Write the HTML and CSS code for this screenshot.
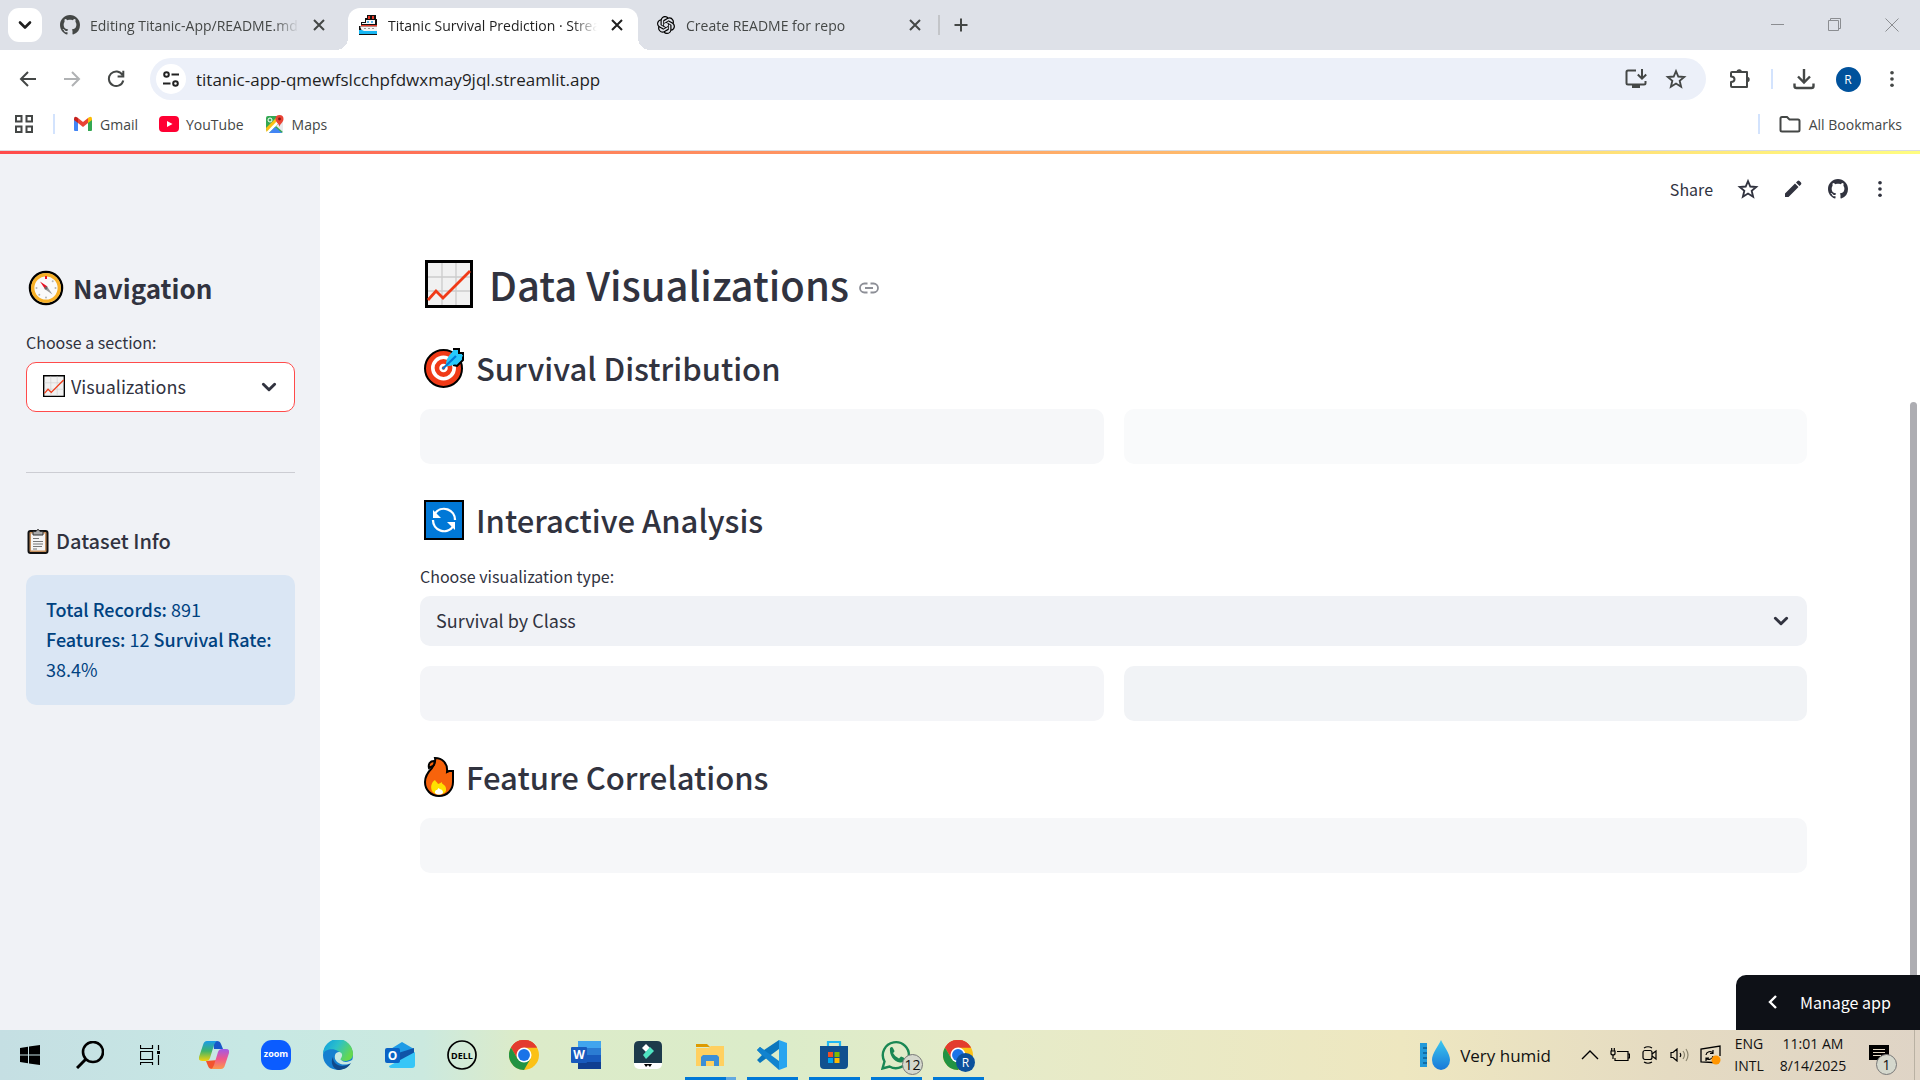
FILE: index.html
```html
<!DOCTYPE html>
<html lang="en">
<head>
<meta charset="utf-8">
<title>Titanic Survival Prediction · Streamlit</title>
<link rel="stylesheet" href="styles.css">
</head>
<body>
<svg class="defs" aria-hidden="true">
  <symbol id="github" viewBox="0 0 16 16"><path fill="currentColor" d="M8 0C3.58 0 0 3.58 0 8c0 3.54 2.29 6.53 5.47 7.59.4.07.55-.17.55-.38 0-.19-.01-.82-.01-1.49-2.01.37-2.53-.49-2.69-.94-.09-.23-.48-.94-.82-1.13-.28-.15-.68-.52-.01-.53.63-.01 1.08.58 1.23.82.72 1.21 1.87.87 2.33.66.07-.52.28-.87.51-1.07-1.78-.2-3.64-.89-3.64-3.95 0-.87.31-1.59.82-2.15-.08-.2-.36-1.02.08-2.12 0 0 .67-.21 2.2.82.64-.18 1.32-.27 2-.27s1.36.09 2 .27c1.53-1.04 2.2-.82 2.2-.82.44 1.1.16 1.92.08 2.12.51.56.82 1.27.82 2.15 0 3.07-1.87 3.75-3.65 3.95.29.25.54.73.54 1.48 0 1.07-.01 1.93-.01 2.2 0 .21.15.46.55.38A8.01 8.01 0 0 0 16 8c0-4.42-3.58-8-8-8z"/></symbol>
  <symbol id="close" viewBox="0 0 20 20"><path d="M5 5l10 10M15 5L5 15" fill="none" stroke="currentColor" stroke-width="2"/></symbol>
  <symbol id="dots" viewBox="0 0 24 24"><g fill="currentColor"><circle cx="12" cy="4.500" r="2.200"/><circle cx="12" cy="12" r="2.200"/><circle cx="12" cy="19.500" r="2.200"/></g></symbol>
  <symbol id="chevron" viewBox="0 0 16 16"><path d="M3 5.500l5 5 5-5" fill="none" stroke="currentColor" stroke-width="2.600" stroke-linecap="round" stroke-linejoin="round"/></symbol>
  <symbol id="star" viewBox="0 0 24 24"><path d="M12 3.300l2.500 6 6.500.5-5 4.200 1.600 6.400L12 17l-5.600 3.400L8 14 3 9.800l6.500-.5z" fill="none" stroke="currentColor" stroke-width="2"/></symbol>
  <symbol id="chart" viewBox="0 0 48 48"><path fill="#f1f1f1" stroke="#000" stroke-width="3" d="M1.500 1.500h45v45h-45z"/><path d="M17 3v42M31 3v42M3 17h42M3 31h42" stroke="#ccc" stroke-width="1.300"/><path d="M3 40l8-9 7 7L45 11" fill="none" stroke="#f03a17" stroke-width="2.800"/></symbol>
  <symbol id="chrome" viewBox="0 0 48 48"><circle cx="24" cy="24" r="24" fill="#fbc116"/><path fill="#e33b2e" d="M24 24L3.200 12A24 24 0 0 1 44.800 12H24z"/><path fill="#e33b2e" d="M3.200 12l10.400 18L24 24V12h20.800A24 24 0 0 0 3.200 12z"/><path fill="#229342" d="M3.200 12A24 24 0 0 0 24 48l10.400-18L24 24l-10.400 6z"/><circle cx="24" cy="24" r="12" fill="#fff"/><circle cx="24" cy="24" r="9.500" fill="#1a73e8"/></symbol>
</svg>

<header class="browser">
  <div class="tabstrip">
    <button class="tab-search" aria-label="Search tabs"><svg width="16" height="16"><use href="#chevron"/></svg></button>
    <div class="tab">
      <svg width="20" height="20"><use href="#github"/></svg>
      <span class="tab-title">Editing Titanic-App/README.md</span>
      <button class="tab-close" aria-label="Close tab"><svg width="20" height="20"><use href="#close"/></svg></button>
    </div>
    <div class="tab active">
      <svg width="20" height="20" viewBox="0 0 20 20"><path fill="#111" d="M9 0h9v4h1v16H1v-9h2V7h4V3h2z"/><path fill="#f7f7f7" d="M8 5h9v4H4V8h4z"/><path fill="#e8392a" d="M10 1h2v3h-2zM14 1h2v3h-2zM3 10h16v1.500H3z"/><path fill="#5bb8e8" d="M9 6h2v2H9zM13 6h2v2h-2z"/><path fill="#f4f4f4" d="M2 11.500h17V16H4z"/><path fill="#999" d="M6 13h2v1H6zM10 13h2v1h-2zM14 13h2v1h-2z"/><path fill="#18b6f2" d="M1 15h3l2 1h13v3H1z"/></svg>
      <span class="tab-title">Titanic Survival Prediction · Streamlit</span>
      <button class="tab-close" aria-label="Close tab"><svg width="20" height="20"><use href="#close"/></svg></button>
    </div>
    <div class="tab">
      <svg width="20" height="18" viewBox="0 0 24 24"><path d="M22.2819 9.8211a5.9847 5.9847 0 0 0-.5157-4.9108 6.0462 6.0462 0 0 0-6.5098-2.9A6.0651 6.0651 0 0 0 4.9807 4.1818a5.9847 5.9847 0 0 0-3.9977 2.9 6.0462 6.0462 0 0 0 .7427 7.0966 5.98 5.98 0 0 0 .511 4.9107 6.051 6.051 0 0 0 6.5146 2.9001A5.9847 5.9847 0 0 0 13.2599 24a6.0557 6.0557 0 0 0 5.7718-4.2058 5.9894 5.9894 0 0 0 3.9977-2.9001 6.0557 6.0557 0 0 0-.7475-7.0729zm-9.022 12.6081a4.4755 4.4755 0 0 1-2.8764-1.0408l.1419-.0804 4.7783-2.7582a.7948.7948 0 0 0 .3927-.6813v-6.7369l2.02 1.1686a.071.071 0 0 1 .038.052v5.5826a4.504 4.504 0 0 1-4.4945 4.4944zm-9.6607-4.1254a4.4708 4.4708 0 0 1-.5346-3.0137l.142.0852 4.783 2.7582a.7712.7712 0 0 0 .7806 0l5.8428-3.3685v2.3324a.0804.0804 0 0 1-.0332.0615L9.74 19.9502a4.4992 4.4992 0 0 1-6.1408-1.6464zM2.3408 7.8956a4.485 4.485 0 0 1 2.3655-1.9728V11.6a.7664.7664 0 0 0 .3879.6765l5.8144 3.3543-2.0201 1.1685a.0757.0757 0 0 1-.071 0l-4.8303-2.7865A4.504 4.504 0 0 1 2.3408 7.872zm16.5963 3.8558L13.1038 8.364 15.1192 7.2a.0757.0757 0 0 1 .071 0l4.8303 2.7913a4.4944 4.4944 0 0 1-.6765 8.1042v-5.6772a.79.79 0 0 0-.407-.667zm2.0107-3.0231l-.142-.0852-4.7735-2.7818a.7759.7759 0 0 0-.7854 0L9.409 9.2297V6.8974a.0662.0662 0 0 1 .0284-.0615l4.8303-2.7866a4.4992 4.4992 0 0 1 6.6802 4.66zM8.3065 12.863l-2.02-1.1638a.0804.0804 0 0 1-.038-.0567V6.0742a4.4992 4.4992 0 0 1 7.3757-3.4537l-.142.0805L8.704 5.459a.7948.7948 0 0 0-.3927.6813zm1.0976-2.3654l2.602-1.4998 2.6069 1.4998v2.9994l-2.5974 1.4997-2.6067-1.4997Z"/></svg>
      <span class="tab-title">Create README for repo</span>
      <button class="tab-close" aria-label="Close tab"><svg width="20" height="20"><use href="#close"/></svg></button>
    </div>
    <div class="new-tab">
      <button aria-label="New tab"><svg width="20" height="20" viewBox="0 0 20 20"><path d="M10 3.500v13M3.500 10h13" stroke="currentColor" stroke-width="2"/></svg></button>
    </div>
    <div class="window-controls">
      <button aria-label="Minimize"><svg width="14" height="14" viewBox="0 0 14 14"><path d="M0 6.500h13" stroke="#8b8d91"/></svg></button>
      <button aria-label="Restore"><svg width="14" height="14" viewBox="0 0 14 14"><path d="M.5 2.500h10v10H.5zM2.500 2.500v-2h10v10h-2" fill="none" stroke="#8b8d91"/></svg></button>
      <button aria-label="Close"><svg width="14" height="14" viewBox="0 0 14 14"><path d="M.5.500l13 13M13.500.500l-13 13" stroke="#8b8d91"/></svg></button>
    </div>
  </div>

  <div class="toolbar">
    <button class="tool" aria-label="Back"><svg width="18" height="18" viewBox="0 0 18 18"><path d="M17 9H2.500M9 2L2 9l7 7" fill="none" stroke="currentColor" stroke-width="2"/></svg></button>
    <button class="tool disabled" aria-label="Forward"><svg width="18" height="18" viewBox="0 0 18 18"><path d="M1 9h14.500M9 2l7 7-7 7" fill="none" stroke="currentColor" stroke-width="2"/></svg></button>
    <button class="tool" aria-label="Reload"><svg width="18" height="18" viewBox="0 0 18 18"><path d="M15.500 5A7.300 7.300 0 1 0 16.300 10.500M16.300.800v5.700h-5.700" fill="none" stroke="currentColor" stroke-width="2"/></svg></button>
    <div class="address">
      <button class="site-info" aria-label="Site information"><svg width="18" height="18" viewBox="0 0 18 18"><g fill="none" stroke="#222" stroke-width="2"><circle cx="4.500" cy="4.500" r="2.300"/><path d="M9.500 4.500H17M1 13.500h7.500"/><circle cx="13.500" cy="13.500" r="2.300"/></g></svg></button>
      <input type="text" aria-label="Address" value="titanic-app-qmewfslcchpfdwxmay9jql.streamlit.app">
      <button class="address-tool" aria-label="Install app"><svg width="22" height="20" viewBox="0 0 22 20"><path d="M11 1.500H3q-1.500 0-1.500 1.500v11q0 1.500 1.500 1.500h16q1.500 0 1.500-1.500v-2M17 0v9M12.800 5.500L17 9.700l4.200-4.200" fill="none" stroke="currentColor" stroke-width="2"/><path fill="currentColor" d="M7 16h8v3H7z"/></svg></button>
      <button class="address-tool" aria-label="Bookmark this tab"><svg width="22" height="22"><use href="#star"/></svg></button>
    </div>
    <button class="tool" aria-label="Extensions"><svg width="22" height="22" viewBox="0 0 22 22"><path d="M3 4h15v15H3q-1 0-1-1v-4q3.500 0 3.500-2.700T2 8.500V5q0-1 1-1z" fill="none" stroke="currentColor" stroke-width="2" stroke-linejoin="round"/><path fill="currentColor" d="M7.500 4a2.700 2.700 0 0 1 5.400 0zM18 8.800a2.700 2.700 0 0 1 0 5.400z"/></svg></button>
    <span class="divider"></span>
    <button class="tool" aria-label="Downloads"><svg width="22" height="22" viewBox="0 0 22 22"><path d="M11 1v13M5 8.500l6 6 6-6M1.500 15.500V18q0 2 2 2h15q2 0 2-2v-2.500" fill="none" stroke="currentColor" stroke-width="2.400"/></svg></button>
    <button class="tool" aria-label="Profile"><span class="avatar">R</span></button>
    <button class="tool" aria-label="Menu"><svg width="20" height="20"><use href="#dots"/></svg></button>
  </div>

  <nav class="bookmarks">
    <button class="apps" aria-label="Apps"><svg width="18" height="18" viewBox="0 0 18 18"><path d="M1 1h5.500v5.500H1zM11.500 1H17v5.500h-5.500zM1 11.500h5.500V17H1zM11.500 11.500H17V17h-5.500z" fill="none" stroke="#444746" stroke-width="2"/></svg></button>
    <span class="divider"></span>
    <a href="#gmail"><svg width="20" height="20" viewBox="0 0 20 20"><path fill="#4285f4" d="M1 5l4 3v9H2q-1 0-1-1z"/><path fill="#34a853" d="M15 8l4-3v11q0 1-1 1h-3z"/><path fill="#ea4335" d="M5 4l5 4 5-4v5l-5 4-5-4z"/><path fill="#c5221f" d="M1 5q0-3 3-1.800L5 4v5L1 6z"/><path fill="#fbbc04" d="M19 5q0-3-3-1.800L15 4v5l4-3z"/></svg>Gmail</a>
    <a href="#youtube"><svg width="20" height="20" viewBox="0 0 20 20"><rect y="2" width="20" height="16" rx="4" fill="#f03"/><path fill="#fff" d="M8 7l5.500 3L8 13z"/></svg>YouTube</a>
    <a href="#maps"><svg width="20" height="20" viewBox="0 0 20 20"><rect x="1" y="2" width="17" height="17" rx="2" fill="#34a853"/><path fill="#fff" d="M1 17L16 2h2v3L4 19H1z"/><path fill="#fbc116" d="M1 14L12 3l2 2L1.500 18z"/><path fill="#4285f4" d="M4 19l6-6 7 6z"/><path fill="#e8eaed" d="M11 12l7-6v12z"/><circle cx="5" cy="6" r="2" fill="none" stroke="#fff"/><path fill="#ea4335" d="M14.500 13c0-3-4-4.500-4-8a4 4 0 0 1 8 0c0 3.500-4 5-4 8z"/><circle cx="14.500" cy="5" r="1.400" fill="#811411"/></svg>Maps</a>
    <span class="spacer"></span>
    <span class="divider"></span>
    <a class="all-bookmarks" href="#bookmarks"><svg width="22" height="18" viewBox="0 0 22 18"><path d="M3 2h5l2.500 2.500H19q1.500 0 1.500 1.500v9q0 1.500-1.500 1.500H3Q1.500 16.500 1.500 15V3.500Q1.500 2 3 2z" fill="none" stroke="#444746" stroke-width="2"/></svg>All Bookmarks</a>
  </nav>
</header>

<div class="app">
  <aside class="sidebar">
    <h2 class="nav-title"><svg width="36" height="36" viewBox="0 0 36 36"><circle cx="18" cy="18" r="16" fill="#fff" stroke="#000" stroke-width="2.500"/><circle cx="18" cy="18" r="13.300" fill="#fafafa" stroke="#f7b027" stroke-width="3.400"/><g fill="#b5b5b5"><circle cx="8.500" cy="18" r="1"/><circle cx="27.500" cy="18" r="1"/><circle cx="18" cy="27.500" r="1"/><circle cx="11.300" cy="24.700" r="1"/><circle cx="24.700" cy="11.300" r="1"/></g><path fill="#e81224" d="M17 6h2v3h-2zM12 11.500l7.500 5-2.500 2.500z"/><path fill="#999" d="M24.500 24.500L16.500 19l2.500-2.500z"/><circle cx="18" cy="18" r="1.500" fill="#666"/></svg>Navigation</h2>
    <label class="field-label" for="section">Choose a section:</label>
    <div class="field focused">
      <select id="section"><option>Visualizations</option><option>Home</option></select>
      <svg class="field-icon" width="22" height="22"><use href="#chart"/></svg>
      <svg class="field-arrow" width="18" height="18"><use href="#chevron"/></svg>
    </div>
    <hr>
    <h3><svg width="24" height="26" viewBox="0 0 24 26"><rect x="2.500" y="3" width="19" height="22" rx="2" fill="#c58f5c" stroke="#111" stroke-width="2"/><path fill="#f5f5f5" d="M5 5.500h14v17H5z"/><path fill="#aaa" stroke="#333" d="M7 7V3.500h3q2-4 4 0h3V7z"/><path d="M7 10.500h6M7 13.500h10M7 16h10M7 18.500h9M7 21h4" stroke="#777"/></svg>Dataset Info</h3>
    <p class="info"><strong>Total Records:</strong> 891 <strong>Features:</strong> 12 <strong>Survival Rate:</strong> 38.4%</p>
  </aside>

  <main class="main">
    <div class="app-actions">
      <button class="share">Share</button>
      <button aria-label="Favourite"><svg width="22" height="22"><use href="#star"/></svg></button>
      <button aria-label="Edit"><svg width="18" height="18" viewBox="0 0 18 18"><path fill="currentColor" d="M1 13.500L11 3.500l3.500 3.500-10 10H1zM12 2.500l1.500-1.500q1-.8 2 0L17 2.500q.8 1 0 2L15.500 6z"/></svg></button>
      <button aria-label="View source"><svg width="20" height="20"><use href="#github"/></svg></button>
      <button class="menu" aria-label="Main menu"><svg width="20" height="20"><use href="#dots"/></svg></button>
    </div>
    <div class="content">
      <h1><svg width="48" height="48"><use href="#chart"/></svg>Data Visualizations<a href="#data-visualizations" aria-label="Link to heading"><svg width="20" height="12" viewBox="0 0 20 12"><path d="M8.500 1.500h-3a4.500 4.500 0 0 0 0 9h3M11.500 1.500h3a4.500 4.500 0 0 1 0 9h-3M6 6h8" fill="none" stroke="#8d8f97" stroke-width="1.800"/></svg></a></h1>

      <h2><svg width="40" height="40" viewBox="0 0 40 40"><circle cx="19.500" cy="20.500" r="18.500" fill="#f03a17" stroke="#000" stroke-width="2"/><circle cx="19.500" cy="20" r="10.700" fill="none" stroke="#fff" stroke-width="3.600"/><circle cx="19.500" cy="20" r="3" fill="#f03a17" stroke="#fff" stroke-width="2.500"/><path d="M29 1h6v4h4v7l-6 6-4-1" fill="#26c9fc" stroke="#000" stroke-width="2"/><path fill="#26c9fc" d="M22 18q-1-7 7-15l5-1v5h5l-2 5q-8 7-15 6z"/><path d="M18.500 21L32 8" stroke="#0078d7" stroke-width="2.200"/></svg>Survival Distribution</h2>
      <div class="columns">
        <div class="skeleton tone-light"></div>
        <div class="skeleton tone-faint"></div>
      </div>

      <h2><svg width="40" height="40" viewBox="0 0 40 40"><path fill="#0078d7" stroke="#000" stroke-width="2" d="M1 1h38v38H1z"/><path d="M11 13.500A11 11 0 0 1 31 20M29 26.500A11 11 0 0 1 9 20" fill="none" stroke="#fff" stroke-width="2.300"/><path fill="#fff" d="M9 10v8h8zM31 30v-8h-8z"/></svg>Interactive Analysis</h2>
      <label class="field-label" for="viz">Choose visualization type:</label>
      <div class="field">
        <select id="viz"><option>Survival by Class</option><option>Survival by Gender</option></select>
        <svg class="field-arrow" width="18" height="18"><use href="#chevron"/></svg>
      </div>
      <div class="columns">
        <div class="skeleton tone-medium"></div>
        <div class="skeleton tone-strong"></div>
      </div>

      <h2><svg width="30" height="40" viewBox="0 0 30 40"><path fill="#f7630c" stroke="#000" stroke-width="2" d="M11 1c7 0 13 5 12 14l2-1h4v11c0 8-6 14-14 14S1 33 1 25c0-6 3-10 7-14 2-3 4-6 3-10z"/><path fill="#f7630c" stroke="#000" stroke-width="2" d="M5 11c-1-4 1-7 5-7 1 2 0 4-1 5z"/><path fill="#ffe100" d="M8 34c-2-5 0-9 3-11 1 2 2 2 3 4 2-1 3-1 4-2-1 3 5 2 4 9-2 4-11 5-14 0z"/><path fill="#fff" d="M11 36c0-3 1-3 2-3 1-1 1-2 2-2 0 2 4 0 4 5-2 2-6 2-8 0z"/></svg>Feature Correlations</h2>
      <div class="skeleton tone-light"></div>
    </div>
    <div class="scroll-thumb"></div>
    <button class="manage"><svg width="14" height="16" viewBox="0 0 14 16"><path d="M10 2L4 8l6 6" fill="none" stroke="#fff" stroke-width="2.400"/></svg>Manage app</button>
  </main>
</div>

<footer class="taskbar">
  <button class="sys" aria-label="Start"><svg width="20" height="20" viewBox="0 0 20 20"><path d="M0 3l8-1.200v7.700H0zM9 1.600L20 0v9.500H9zM0 10.500h8v7.700L0 17zM9 10.500h11V20L9 18.400z"/></svg></button>
  <button class="sys" aria-label="Search"><svg width="28" height="28" viewBox="0 0 28 28"><circle cx="17" cy="11" r="10" fill="none" stroke="#000" stroke-width="2.600"/><path d="M10 18l-9 9" stroke="#000" stroke-width="3"/></svg></button>
  <button class="sys" aria-label="Task view"><svg width="20" height="20" viewBox="0 0 20 20"><path d="M.5 0v3.500h12V0M.5 6.500h12v8H.5zM.5 20v-2.500h12V20M18.500 0v5M18.500 10v10" fill="none" stroke="#000" stroke-width="1.200"/><path d="M17 6h3v3h-3z"/></svg></button>
  <div class="pinned">
    <button aria-label="Copilot"><svg width="30" height="28" viewBox="0 0 30 28"><defs><linearGradient id="cp1" x2="0" y2="1"><stop stop-color="#1b9bea"/><stop offset=".5" stop-color="#3fb46b"/><stop offset="1" stop-color="#f4d20b"/></linearGradient><linearGradient id="cp2" x2="0" y2="1"><stop stop-color="#a05be8"/><stop offset=".5" stop-color="#f0588a"/><stop offset="1" stop-color="#fb9a4b"/></linearGradient></defs><path fill="#1857c9" d="M14 0h4q3 0 4 3l2 5h-9z"/><path fill="#f2542d" d="M7 20l2 5q1 3 4 3l4-1 2-8z"/><path fill="url(#cp1)" d="M8 0h10q-2 1-3 4l-4 13q-1 3-4 3H3q-4 0-3-4L4 4q1-4 4-4z"/><path fill="url(#cp2)" d="M22 28H12q2-1 3-4l4-13q1-3 4-3h4q4 0 3 4l-4 12q-1 4-4 4z"/></svg></button>
    <button aria-label="Zoom"><svg width="30" height="30" viewBox="0 0 30 30"><rect width="30" height="30" rx="11" fill="#0b5cff"/><text x="15" y="17" text-anchor="middle" font-size="9" font-weight="700" fill="#fff">zoom</text></svg></button>
    <button aria-label="Edge"><svg width="30" height="30" viewBox="0 0 30 30"><defs><linearGradient id="eg" x2="1" y2=".5"><stop stop-color="#0b9be3"/><stop offset=".5" stop-color="#2cc0c9"/><stop offset="1" stop-color="#65d84f"/></linearGradient></defs><circle cx="15" cy="15" r="15" fill="#157fd0"/><path fill="url(#eg)" d="M0 14A15 15 0 0 1 30 14c0 5-4 7-8 7-3 0-5-1-5-2 2-2 2-6-2-8C10 8 2 9 0 14z"/><path fill="#114a8b" d="M10 17c0 8 9 12 18 6-3 5-8 7-13 7-5-1-8-8-5-13z"/><path fill="#c8e8e2" d="M12 15c2-5 8-3 7 1-1 3-2 3-1 4 3 3 8 2 11 0l1 2-2 1c-7 4-18 0-16-8z"/></svg></button>
    <button aria-label="Outlook"><svg width="30" height="26" viewBox="0 0 30 26"><path fill="#1e9be6" d="M4 8L17 0l12 7v4L6 20z"/><path fill="#0f54a8" d="M10 12l19-6v7L12 22z"/><path fill="#37c6f7" d="M4 24l26-14v13q0 3-3 3H7q-3 0-3-2z"/><rect y="6" width="15" height="15" rx="2" fill="#0a63c5"/><text x="7.500" y="18" text-anchor="middle" font-size="12" font-weight="700" fill="#fff">O</text></svg></button>
    <button aria-label="Dell"><svg width="30" height="30" viewBox="0 0 30 30"><circle cx="15" cy="15" r="14" fill="none" stroke="#000" stroke-width="1.700"/><text x="15" y="18.500" text-anchor="middle" font-size="9" font-weight="700">DELL</text></svg></button>
    <button aria-label="Chrome"><svg width="30" height="30"><use href="#chrome"/></svg></button>
    <button aria-label="Word"><svg width="30" height="28" viewBox="0 0 30 28"><path fill="#41a5ee" d="M7 0h23v7H7z"/><path fill="#2b7cd3" d="M7 7h23v7H7z"/><path fill="#185abd" d="M7 14h23v7H7z"/><path fill="#103f91" d="M7 21h23v7H7z"/><rect y="6" width="16" height="16" rx="1" fill="#185abd"/><text x="8" y="18" text-anchor="middle" font-size="12" font-weight="700" fill="#fff">W</text></svg></button>
    <button aria-label="Filmora"><svg width="28" height="28" viewBox="0 0 28 28"><rect width="28" height="28" rx="5" fill="#fff"/><path fill="#1d3a4b" d="M5 0h18q5 0 5 5v17H0V5q0-5 5-5z"/><path fill="#fff" d="M12 3l4 4-4 4-4-4z"/><path fill="#50e3c2" d="M16 6l4 4-8 8-3-4z"/><path d="M10 23l2 3 2-2 2 2 2-3z"/></svg></button>
    <button class="running more" aria-label="File Explorer"><svg width="28" height="24" viewBox="0 0 28 24"><path fill="#dd9a00" d="M0 1h11l3 3H0z"/><path fill="#ffd060" d="M0 5h12l3-2h13v20H0z"/><path fill="#3d8fd6" d="M5 23v-9l2-2h14l2 2v9h-5v-5h-8v5z"/></svg></button>
    <button class="running" aria-label="Visual Studio Code"><svg width="30" height="30" viewBox="0 0 30 30"><path fill="#0a76bd" d="M0 10l3-3 4 3 15-10v9L7 20l-4 3-3-3 5-5z"/><path fill="#1183cf" d="M0 10l3-3 19 14v9L5 15z"/><path fill="#28a4ef" d="M22 0l8 3v24l-8 3z"/></svg></button>
    <button class="running" aria-label="Microsoft Store"><svg width="30" height="30" viewBox="0 0 30 30"><path d="M9 8V2h12v6" fill="none" stroke="#21b8f3" stroke-width="2.200"/><path fill="#11508f" d="M1 6h28v19q0 4-4 4H5q-4 0-4-4z"/><path fill="#f25022" d="M9 12h5v5H9z"/><path fill="#7fba00" d="M15.500 12h5v5h-5z"/><path fill="#00a4ef" d="M9 18h5v5H9z"/><path fill="#ffb900" d="M15.500 18h5v5h-5z"/></svg></button>
    <button class="running" aria-label="WhatsApp"><svg width="30" height="30" viewBox="0 0 30 30"><path fill="none" stroke="#1a8754" stroke-width="2.400" d="M1.500 28.500l2-7a13 13 0 1 1 5 5z"/><path fill="#1a8754" d="M9 8q2-2 3 0l1.500 3q0 1-1.500 2 2 4 6 5.500l2-2q3 .5 4 2.500-1 4-5 3.500C13 22 8 15 9 8z"/></svg><span class="badge">12</span></button>
    <button class="running" aria-label="Chrome profile R"><svg width="30" height="30"><use href="#chrome"/></svg><span class="badge profile">R</span></button>
  </div>
  <div class="tray">
    <button class="weather"><svg width="32" height="30" viewBox="0 0 32 30"><defs><linearGradient id="drop" x2="0" y2="1"><stop stop-color="#3cc8ef"/><stop offset="1" stop-color="#1878d8"/></linearGradient></defs><path fill="#2399d9" d="M0 3h7v24H0z"/><path d="M3 8h4M3 13h4M3 18h4M3 23h4" stroke="#0d5d94" stroke-width="1.300"/><path fill="url(#drop)" d="M21 0c3 7 9 13 9 20a9 10 0 0 1-18 0c0-7 6-13 9-20z"/></svg>Very humid</button>
    <button aria-label="Show hidden icons"><svg width="18" height="10" viewBox="0 0 18 10"><path d="M1 9l8-8 8 8" fill="none" stroke="#000" stroke-width="1.400"/></svg></button>
    <button aria-label="Battery"><svg width="20" height="14" viewBox="0 0 20 14"><path d="M7 3.500h11v9H5V10M18 6h1.500v4H18M1 3h4v3q-2 2-4 0zM1.700 0v3M4.300 0v3M3 7v4" fill="none" stroke="#000" stroke-width="1.200"/></svg></button>
    <button aria-label="Camera"><svg width="16" height="18" viewBox="0 0 16 18"><rect x="1" y="4.500" width="9" height="9" rx="2" fill="none" stroke="#000" stroke-width="1.200"/><path d="M10 8l4-3v8l-4-3M2 2q4-2.500 8 0M2 16q4 2.500 8 0" fill="none" stroke="#000" stroke-width="1.200"/></svg></button>
    <button aria-label="Volume"><svg width="20" height="14" viewBox="0 0 20 14"><path d="M1 4.500h2L7 1v12L3 9.500H1zM10 5q1.500 2 0 4" fill="none" stroke="#000" stroke-width="1.200"/><path d="M13 3q3 4 0 8M16 1q4 6 0 12" fill="none" stroke="#8c866f" stroke-width="1.200"/></svg></button>
    <button aria-label="Windows Update"><svg width="21" height="20" viewBox="0 0 21 20"><path d="M13 17.500L1 17V4l19-3v10" fill="none" stroke="#000" stroke-width="1.300"/><path d="M6 10a4 4 0 0 1 7-2M13 5v3.500h-3M13 11a4 4 0 0 1-7 2M6 16v-3h3" fill="none" stroke="#000" stroke-width="1.200"/><circle cx="16" cy="15" r="4.500" fill="#ff9500"/></svg></button>
    <button class="two-line">ENG<br>INTL</button>
    <button class="two-line clock">11:01 AM<br>8/14/2025</button>
    <button class="notifications" aria-label="Notifications"><svg width="20" height="20" viewBox="0 0 20 20"><path d="M0 0h20v15h-8l-4 4v-4H0z"/><path d="M4 4.500h12M4 7.500h12M4 10.500h8" stroke="#e3d9c4" stroke-width="1.200"/></svg><span class="badge">1</span></button>
  </div>
</footer>
</body>
</html>
```
FILE: styles.css
```css
* { box-sizing: border-box; }

:root {
  --ui: "Open Sans", "Noto Sans", sans-serif;
  --app: "Noto Sans CJK SC", "Noto Sans", sans-serif;
  --ink: #31333f;
}

body {
  margin: 0;
  min-height: 100vh;
  display: flex;
  flex-direction: column;
  font-family: var(--ui);
  background: #fff;
}

.defs { position: absolute; width: 0; height: 0; }
svg { flex: none; display: block; }

button {
  padding: 0;
  border: 0;
  background: none;
  font: inherit;
  color: inherit;
  display: flex;
  align-items: center;
  justify-content: center;
}

a { color: inherit; text-decoration: none; }

/* Browser chrome */
.browser { color: #444746; font-size: 14px; }

.tabstrip {
  height: 50px;
  padding: 8px 0 0 8px;
  display: flex;
  gap: 8px;
  background: #dee1e8;
}

.tab-search {
  width: 34px;
  height: 34px;
  border-radius: 11px;
  background: #fff;
  color: #1f1f1f;
}

.tab {
  position: relative;
  width: 290px;
  height: 34px;
  padding: 0 11px 0 10px;
  display: flex;
  align-items: center;
  gap: 10px;
}

.tab.active {
  height: 42px;
  padding-bottom: 8px;
  border-radius: 12px 12px 0 0;
  background: #fff;
  color: #1f1f1f;
}

.tab.active::before,
.tab.active::after {
  content: "";
  position: absolute;
  bottom: 0;
  width: 12px;
  height: 12px;
}

.tab.active::before {
  left: -12px;
  background: radial-gradient(circle at 0 0, transparent 12px, #fff 12px);
}

.tab.active::after {
  right: -12px;
  background: radial-gradient(circle at 100% 0, transparent 12px, #fff 12px);
}

.tab-title {
  flex: 1;
  overflow: hidden;
  white-space: nowrap;
  -webkit-mask-image: linear-gradient(to right, #000 88%, transparent);
  mask-image: linear-gradient(to right, #000 88%, transparent);
}

.new-tab {
  height: 34px;
  margin-left: -6px;
  padding-left: 10px;
  display: flex;
  align-items: center;
}

.new-tab::before {
  content: "";
  width: 2px;
  height: 20px;
  margin: 0 11px 0 -10px;
  background: #c3c5c9;
}

.window-controls {
  height: 34px;
  margin-left: auto;
  display: flex;
}

.window-controls button { width: 57px; }

.toolbar {
  padding: 8px 6px;
  display: flex;
  align-items: center;
}

.tool { width: 44px; height: 42px; }
.disabled { color: #b0b2b4; }

.address {
  flex: 1;
  height: 42px;
  margin: 0 12px;
  padding: 0 10px 0 6px;
  display: flex;
  align-items: center;
  border-radius: 21px;
  background: #ecf0f9;
}

.site-info {
  width: 30px;
  height: 30px;
  border-radius: 50%;
  background: #fff;
}

.address input {
  flex: 1;
  margin-left: 10px;
  padding: 0;
  border: 0;
  outline: 0;
  background: none;
  font: 17px var(--ui);
  color: #1f1f1f;
}

.address-tool { width: 40px; height: 40px; }

.divider {
  width: 2px;
  height: 20px;
  margin: 0 9px;
  background: #d3e3fd;
}

.avatar {
  width: 25px;
  height: 25px;
  border-radius: 50%;
  background: #00529c;
  color: #fff;
  font-size: 12px;
  line-height: 25px;
}

.bookmarks {
  height: 43px;
  padding: 0 18px 10px 15px;
  display: flex;
  align-items: center;
  border-bottom: 1px solid #dadce0;
}

.bookmarks a {
  margin-right: 21px;
  display: flex;
  align-items: center;
  gap: 7px;
}

.apps + .divider { margin: 0 18px 0 20px; }
.bookmarks .all-bookmarks { margin: 0 0 0 10px; gap: 8px; }
.spacer { flex: 1; }

/* Streamlit app */
.app {
  position: relative;
  flex: 1;
  display: flex;
  padding-top: 3px;
  font-family: var(--app);
  color: var(--ink);
}

.app::before {
  content: "";
  position: absolute;
  inset: 0 0 auto;
  height: 3px;
  background: linear-gradient(to right, #ff4b4b, #fffd80);
}

.app h1, .app h2, .app h3 {
  margin: 0;
  display: flex;
  align-items: center;
  white-space: nowrap;
}

.sidebar {
  flex: none;
  width: 320px;
  padding: 114px 25px 0 26px;
  background: #f0f2f6;
}

.sidebar .nav-title {
  margin-bottom: 23px;
  padding-left: 2px;
  gap: 9px;
  font-size: 26px;
  font-weight: 700;
  line-height: 40px;
}

.field-label {
  display: block;
  margin-bottom: 9px;
  font-size: 16px;
  line-height: 22px;
}

.field { position: relative; }

.field select {
  display: block;
  width: 100%;
  height: 50px;
  padding: 0 48px 2px 15px;
  appearance: none;
  border: 1px solid transparent;
  border-radius: 10px;
  outline: 0;
  background: #f0f2f6;
  font: 18px var(--app);
  color: inherit;
}

.field.focused select {
  padding-left: 44px;
  border-color: #ff4b4b;
  background: #fff;
}

.field-icon { position: absolute; left: 17px; top: 13px; }
.field-arrow { position: absolute; right: 17px; top: 16px; pointer-events: none; }

.sidebar hr {
  margin: 60px 0 53px;
  border: 0;
  border-top: 1px solid #cccdd3;
}

.sidebar h3 {
  margin-bottom: 19px;
  gap: 6px;
  font-size: 20px;
  font-weight: 500;
  line-height: 30px;
}

.info {
  margin: 0;
  padding: 19px 20px 21px;
  border-radius: 10px;
  background: #dae6f4;
  color: #004280;
  font-size: 18px;
  line-height: 30px;
}

.info strong { font-weight: 500; }

.main {
  position: relative;
  flex: 1;
  min-width: 0;
}

.app-actions {
  height: 70px;
  padding-right: 20px;
  display: flex;
  align-items: center;
  justify-content: flex-end;
}

.app-actions button { width: 45px; height: 40px; }
.app-actions .share { width: auto; margin-right: 12px; font-size: 16px; }
.app-actions .menu { width: 40px; }

.content { padding: 27px 113px 100px 100px; }

.content h1 {
  padding-left: 5px;
  gap: 16px;
  font-size: 40px;
  font-weight: 500;
  line-height: 66px;
}

.content h1 a { margin-left: -6px; padding-top: 8px; }

.content h2 {
  margin: 32px 0 17px;
  padding-left: 4px;
  gap: 12px;
  font-size: 31px;
  font-weight: 500;
  line-height: 48px;
}

.content h1 + h2 { margin-top: 27px; }
.content .field-label { margin-top: 21px; }
.content .field { margin-bottom: 20px; }

.columns {
  display: grid;
  grid-template-columns: 1fr 1fr;
  gap: 20px;
}

.skeleton { height: 55px; border-radius: 10px; }
.tone-faint { background: #f9fafb; }
.tone-light { background: #f6f7f9; }
.tone-medium { background: #f4f5f8; }
.tone-strong { background: #f1f3f6; }

.scroll-thumb {
  position: absolute;
  top: 248px;
  right: 3px;
  bottom: 0;
  width: 7px;
  border-radius: 4px;
  background: #adadb2;
}

.manage {
  position: absolute;
  right: 0;
  bottom: 0;
  width: 184px;
  height: 55px;
  padding: 0 0 2px 1px;
  gap: 20px;
  border-radius: 10px 0 0 0;
  background: #0e1117;
  color: #fff;
  font-size: 16px;
}

/* Windows taskbar */
.taskbar {
  height: 50px;
  display: flex;
  background: linear-gradient(to right, #c5dfe3, #c7e8e4 13%, #cbe9df 22%, #dcebc9 27%, #dbecc9 40%, #e6ebc9 52%, #eee7c0 73%, #e5dbc2 87%, #dfd4c6);
  color: #111;
}

.sys { width: 60px; }

.pinned { display: flex; margin-left: 3px; }
.pinned button { position: relative; width: 62px; }

.running::before {
  content: "";
  position: absolute;
  left: 6px;
  right: 5px;
  bottom: 0;
  height: 3px;
  background: #0078d7;
}

.more::before { background: linear-gradient(to right, #0078d7 41px, #63a9e0 41px); }

.badge {
  position: absolute;
  bottom: 5px;
  min-width: 21px;
  height: 21px;
  border: 1px solid #777;
  border-radius: 11px;
  background: #d5d8cd;
  font-size: 14px;
  line-height: 19px;
}

.pinned .badge { right: 4px; }

.pinned .profile {
  right: 14px;
  bottom: 8px;
  min-width: 19px;
  height: 19px;
  border: 0;
  background: #0b519c;
  color: #fff;
  font-size: 12px;
}

.tray {
  margin-left: auto;
  padding-right: 5px;
  display: flex;
}

.tray button { width: 30px; }

.tray .weather { width: auto; margin-right: 24px; gap: 8px; font-size: 17px; }
.tray .two-line { width: 44px; margin-left: 2px; font-size: 14px; line-height: 22px; }
.tray .clock { width: 80px; }

.tray .notifications {
  position: relative;
  width: 62px;
  padding-right: 10px;
  border-right: 1px solid #b9b1a3;
}

.tray .badge { right: 17px; }
```
